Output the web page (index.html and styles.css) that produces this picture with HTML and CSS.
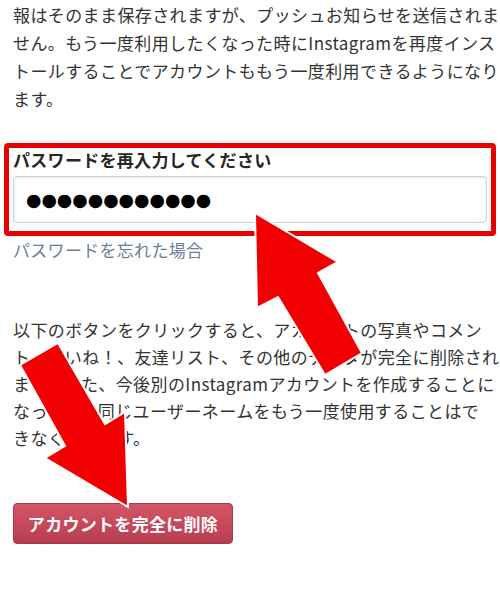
FILE: index.html
```html
<!DOCTYPE html>
<html lang="ja">
<head>
<meta charset="utf-8">
<link rel="stylesheet" href="styles.css">
</head>
<body>
<main class="page">
  <p class="text intro">報はそのまま保存されますが、プッシュお知らせを送信されま<br>せん。もう一度利用したくなった時にInstagramを再度インス<br>トールすることでアカウントももう一度利用できるようになり<br>ます。</p>
  <section class="pw-box">
    <label class="pw-label">パスワードを再入力してください</label>
    <div class="pw-input"><span class="dots">●●●●●●●●●●●●</span></div>
  </section>
  <a class="forgot">パスワードを忘れた場合</a>
  <p class="text warn">以下のボタンをクリックすると、アカウントの写真やコメン<br>ト、いいね！、友達リスト、その他のデータが完全に削除され<br>ます。また、今後別のInstagramアカウントを作成することに<br>なっても、同じユーザーネームをもう一度使用することはで<br>きなくなります。</p>
  <button class="delete">アカウントを完全に削除</button>
</main>
<svg class="arrows" width="500" height="603" viewBox="0 0 500 603">
  <polygon points="255,213 338,262 318,273 362,353 325,375 278,297 257,308" />
  <polygon points="128,507 45,458 65,446 20,365 58,343 105,424 125,412" />
</svg>
</body>
</html>
```
FILE: styles.css
```css
html, body {
  margin: 0;
  padding: 0;
  background: #fff;
}
body {
  width: 500px;
  height: 603px;
  overflow: hidden;
  position: relative;
  font-family: "Noto Sans CJK JP", "Noto Sans", sans-serif;
  color: #333;
}
.page {
  display: flex;
  flex-direction: column;
  align-items: flex-start;
}
.text {
  margin: 0;
  padding-left: 13px;
  font-size: 17px;
  letter-spacing: 0.4px;
  white-space: nowrap;
}
.intro {
  margin-top: 1px;
  line-height: 28px;
}
.pw-box {
  margin: 30px 4px 0 4px;
  width: 474px;
  border: 5px solid #e80000;
  border-radius: 4px;
  padding: 1px 4px 8px 4px;
  display: flex;
  flex-direction: column;
}
.pw-label {
  font-size: 17px;
  font-weight: 700;
  line-height: 22px;
  letter-spacing: 0.3px;
  color: #262626;
}
.pw-input {
  margin-top: 5px;
  height: 45px;
  border: 1px solid #cfcfcf;
  border-radius: 4px;
  box-shadow: inset 0 1px 2px rgba(0,0,0,0.08);
  display: flex;
  align-items: center;
  padding-left: 12px;
}
.dots {
  font-family: "DejaVu Sans", sans-serif;
  font-size: 17.7px;
  color: #000;
}
.forgot {
  margin: 2px 0 0 13px;
  font-size: 17px;
  line-height: 24px;
  letter-spacing: 0.3px;
  color: #6b7f96;
}
.warn {
  margin-top: 54px;
  line-height: 27px;
}
.delete {
  margin: 52px 0 0 13px;
  width: 220px;
  height: 41px;
  padding: 0;
  border: 1px solid #a8394a;
  border-radius: 4px;
  background: linear-gradient(#d35568, #b83e4f);
  color: #fff;
  font-family: "Noto Sans CJK JP", "Noto Sans", sans-serif;
  font-size: 17px;
  font-weight: 700;
  letter-spacing: 0.3px;
}
.arrows {
  position: absolute;
  left: 0;
  top: 0;
}
.arrows polygon {
  fill: #f00000;
  stroke: #fff;
  stroke-width: 2;
  stroke-linejoin: miter;
}
```
